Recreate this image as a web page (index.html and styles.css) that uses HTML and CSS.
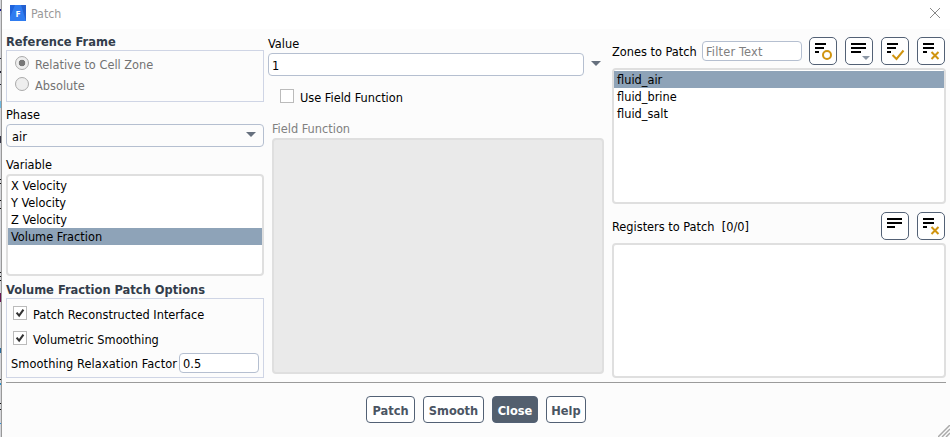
FILE: index.html
```html
<!DOCTYPE html>
<html lang="en">
<head>
    <meta charset="UTF-8">
    <meta name="viewport" content="width=device-width, initial-scale=1.0">
    <title>Patch</title>
    <link rel="stylesheet" href="styles.css">
</head>
<body>
    <div class="desktop-edge"></div>
    <div class="dialog">
        <header class="titlebar">
            <svg class="app-icon" width="16" height="16" viewBox="0 0 16 16">
                <rect width="16" height="16" fill="#2f7cf0"/>
                <path d="M0 0H5L0 12Z" fill="#1f63dc"/>
                <path d="M11 0H16V16Z" fill="#2360d0"/>
                <text x="5.4" y="11.6" font-size="9" font-weight="bold" fill="#fff">F</text>
            </svg>
            <span class="title">Patch</span>
            <svg class="close-x" width="10" height="10" viewBox="0 0 10 10"><path d="M0 0L10 10M10 0L0 10" stroke="#888" fill="none"/></svg>
        </header>

        <main class="content">
            <section class="col-left">
                <h2>Reference Frame</h2>
                <div class="group frame-group">
                    <label class="radio"><i class="dot on"></i>Relative to Cell Zone</label>
                    <label class="radio"><i class="dot"></i>Absolute</label>
                </div>

                <div class="label phase-label">Phase</div>
                <div class="select"><span>air</span><i class="arrow"></i></div>

                <div class="label variable-label">Variable</div>
                <ul class="list variables">
                    <li>X Velocity</li>
                    <li>Y Velocity</li>
                    <li>Z Velocity</li>
                    <li class="selected">Volume Fraction</li>
                </ul>

                <h2 class="options-title">Volume Fraction Patch Options</h2>
                <div class="group options-group">
                    <label class="check"><svg class="box" viewBox="0 0 14 14"><path d="M3 6.5L6 10L11 3"/></svg>Patch Reconstructed Interface</label>
                    <label class="check"><svg class="box" viewBox="0 0 14 14"><path d="M3 6.5L6 10L11 3"/></svg>Volumetric Smoothing</label>
                    <div class="factor"><span>Smoothing Relaxation Factor</span><div class="field">0.5</div></div>
                </div>
            </section>

            <section class="col-mid">
                <div class="label">Value</div>
                <div class="value-row"><div class="field">1</div><i class="arrow"></i></div>
                <label class="check use-field"><svg class="box" viewBox="0 0 14 14"></svg>Use Field Function</label>
                <div class="label disabled function-label">Field Function</div>
                <div class="function-box"></div>
            </section>

            <section class="col-right">
                <div class="toolbar">
                    <span class="zones-label">Zones to Patch</span>
                    <div class="field filter">Filter Text</div>
                    <button class="tool"><svg viewBox="0 0 28 28"><path class="lines" d="M6 7H17M6 11H15M6 15H10"/><circle class="mark" cx="18" cy="18" r="4"/></svg></button>
                    <button class="tool"><svg viewBox="0 0 28 28"><path class="lines" d="M6 7H21M6 11H21M6 15H16"/><path d="M17 19H25L21 23Z" fill="#8c97a5"/></svg></button>
                    <button class="tool"><svg viewBox="0 0 28 28"><path class="lines" d="M6 7H17M6 11H15M6 15H10"/><path class="mark" d="M11.5 18L15.5 22L22.5 13.5"/></svg></button>
                    <button class="tool"><svg viewBox="0 0 28 28"><path class="lines" d="M6 7H17M6 11H17M6 15H10"/><path class="mark" d="M14.5 15L21.5 22M21.5 15L14.5 22"/></svg></button>
                </div>
                <ul class="list zones">
                    <li class="selected">fluid_air</li>
                    <li>fluid_brine</li>
                    <li>fluid_salt</li>
                </ul>
                <div class="toolbar registers-bar">
                    <span class="registers-label">Registers to Patch&nbsp; [0/0]</span>
                    <button class="tool"><svg viewBox="0 0 28 28"><path class="lines" d="M6 7H21M6 11H21M6 15H14"/></svg></button>
                    <button class="tool"><svg viewBox="0 0 28 28"><path class="lines" d="M6 7H17M6 11H17M6 15H10"/><path class="mark" d="M14.5 15L21.5 22M21.5 15L14.5 22"/></svg></button>
                </div>
                <div class="list registers"></div>
            </section>
        </main>

        <footer class="actions">
            <button class="btn patch">Patch</button>
            <button class="btn smooth">Smooth</button>
            <button class="btn close">Close</button>
            <button class="btn help">Help</button>
        </footer>
        <svg class="grip" width="12" height="12" viewBox="0 0 12 12"><path d="M0 12L12 0M4 12L12 4M8 12L12 8" stroke="#aaa" stroke-width="1.5"/></svg>
    </div>
</body>
</html>
```
FILE: styles.css
```css
* {
    box-sizing: border-box;
}
body {
    margin: 0;
    display: flex;
    width: 950px;
    height: 437px;
    overflow: hidden;
    font-family: "DejaVu Sans Condensed", "DejaVu Sans", sans-serif;
    font-size: 12.65px;
    line-height: 17px;
    color: #000;
    background: #fcfcfc;
}
/* sliver of the window behind the dialog */
.desktop-edge {
    width: 2px;
    border-right: 1px solid #999;
    background:
        linear-gradient(#15158a, #15158a) 0 9px / 2px 2px no-repeat,
        linear-gradient(#223, #223) 0 58px / 2px 1px no-repeat,
        linear-gradient(#223, #223) 0 71px / 2px 2px no-repeat,
        linear-gradient(#223, #223) 0 84px / 2px 1px no-repeat,
        linear-gradient(#6db8e0, #6db8e0) 0 101px / 2px 7px no-repeat,
        linear-gradient(#334, #334) 0 136px / 2px 7px no-repeat,
        linear-gradient(#111, #111) 0 179px / 2px 1px no-repeat,
        linear-gradient(#111, #111) 0 183px / 2px 1px no-repeat,
        linear-gradient(#111, #111) 0 200px / 2px 1px no-repeat,
        linear-gradient(#111, #111) 0 208px / 2px 1px no-repeat,
        linear-gradient(#111, #111) 0 272px / 2px 1px no-repeat,
        linear-gradient(#111, #111) 0 276px / 2px 1px no-repeat,
        linear-gradient(#111, #111) 0 280px / 2px 1px no-repeat,
        linear-gradient(#6a1550, #6a1550) 0 293px / 2px 9px no-repeat,
        linear-gradient(#2b6c9c, #2b6c9c) 0 348px / 2px 5px no-repeat,
        linear-gradient(#111, #111) 0 379px / 2px 1px no-repeat,
        linear-gradient(#2b8fc8, #2b8fc8) 0 383px / 2px 2px no-repeat,
        linear-gradient(#111, #111) 0 403px / 2px 1px no-repeat,
        linear-gradient(#111, #111) 0 409px / 2px 1px no-repeat,
        linear-gradient(#2b8fd8, #2b8fd8) 0 423px / 2px 1px no-repeat,
        #d5d6da;
}
.dialog {
    position: relative;
    flex: 1;
    display: flex;
    flex-direction: column;
}
.titlebar {
    display: flex;
    align-items: center;
    height: 29px;
    padding: 0 10px 3px 8px;
    background: #fff;
    color: #999;
}
.title {
    flex: 1;
    margin-left: 5px;
    padding-top: 2px;
    font-size: 12.3px;
}
.content {
    display: flex;
    height: 354px;
    margin: 0 4px;
    border-bottom: 1px solid #9b9b9b;
}
.col-left {
    width: 258px;
    padding-top: 4px;
}
.col-mid {
    width: 336px;
    margin-left: 4px;
    padding-top: 6px;
}
.col-right {
    width: 334px;
    margin-left: 8px;
    padding-top: 8px;
}
h2 {
    margin: 0;
    font-size: 12.75px;
    line-height: 17px;
    color: #333d4b;
    white-space: nowrap;
}
.group {
    border: 1px solid #cfd5e5;
}
.frame-group {
    height: 52px;
    padding: 3px 8px;
    color: #737373;
}
.radio {
    display: flex;
    align-items: center;
    height: 21px;
}
.dot {
    width: 14px;
    height: 14px;
    margin: -3px 6px 0 0;
    border: 1px solid #aaa;
    border-radius: 50%;
    background: #eee;
}
.dot.on {
    background: radial-gradient(circle, #777 3px, #eee 3.6px);
}
.label {
    margin-bottom: 1px;
}
.phase-label {
    margin-top: 4px;
}
.select {
    display: flex;
    justify-content: space-between;
    align-items: center;
    height: 23px;
    padding: 1px 7px 0 5px;
    border: 1px solid #b5bfd0;
    border-radius: 4px;
}
.arrow {
    border: 5px solid transparent;
    border-top-color: #66707e;
    border-bottom: 0;
}
.select .arrow {
    margin-top: -3px;
}
.variable-label {
    margin-top: 9px;
}
.list {
    margin: 0;
    padding: 0;
    list-style: none;
    background: #fff;
    border: 2px solid #dfdfdf;
    border-radius: 4px;
}
.list li {
    height: 17px;
    padding-left: 3px;
    line-height: 18px;
}
.list .selected {
    background: #8ea3b8;
}
.variables {
    height: 102px;
    padding-top: 1px;
}
.variables li {
    line-height: 17px;
}
.options-title {
    margin-top: 5px;
}
.options-group {
    height: 80px;
    padding: 3px 4px;
}
.check {
    display: flex;
    align-items: center;
    height: 25px;
    padding-left: 2px;
}
.box {
    width: 14px;
    height: 14px;
    margin: -3px 6px 0 0;
    border: 1px solid #bbb;
    background: #fff;
}
.box path {
    fill: none;
    stroke: #333;
    stroke-width: 2.4;
}
.factor {
    display: flex;
    align-items: center;
    justify-content: space-between;
    height: 22px;
    letter-spacing: 0.1px;
    white-space: nowrap;
}
.field {
    height: 20px;
    padding: 0 3px;
    border: 1px solid #b5bfd0;
    border-radius: 4px;
    background: #fff;
    line-height: 19px;
}
.factor .field {
    width: 80px;
}
.value-row {
    display: flex;
    align-items: center;
    height: 23px;
}
.value-row .field {
    width: 316px;
    height: 23px;
    margin-right: 7px;
    line-height: 23px;
}
.value-row .arrow {
    margin-top: -2px;
}
.use-field {
    margin-top: 9px;
    padding-left: 12px;
}
.use-field .box {
    margin-top: -3px;
}
.function-label {
    margin: 10px 0 1px 4px;
}
.disabled {
    color: #808080;
}
.function-box {
    width: 332px;
    height: 236px;
    margin-left: 4px;
    border: 2px solid #dfdfdf;
    border-radius: 4px;
    background: #eaeaea;
}
.toolbar {
    display: flex;
    align-items: center;
    gap: 8px;
    height: 28px;
}
.zones-label {
    width: 82px;
    padding-top: 1px;
    white-space: nowrap;
}
.filter {
    width: 100px;
    margin-right: -1px;
    color: #808080;
    letter-spacing: 0.2px;
}
.tool {
    width: 28px;
    height: 28px;
    padding: 0;
    border: 1px solid #536175;
    border-radius: 5px;
    background: #fff;
}
.tool svg {
    display: block;
    width: 28px;
    height: 28px;
    margin: -1px;
}
.lines {
    fill: none;
    stroke: #000;
    stroke-width: 2;
}
.mark {
    fill: none;
    stroke: #d0940f;
    stroke-width: 2;
}
.zones {
    height: 136px;
    margin-top: 3px;
    padding-top: 1px;
}
.registers-bar {
    margin-top: 8px;
    padding-right: 1px;
}
.registers-label {
    flex: 1;
    padding-top: 1px;
}
.registers {
    height: 135px;
    margin-top: 3px;
}
.actions {
    display: flex;
    justify-content: center;
    gap: 8px;
    padding-top: 13px;
}
.btn {
    height: 27px;
    padding: 1px 0 0;
    border: 1px solid #536175;
    border-radius: 4px;
    background: #fff;
    color: #4b5563;
    font: bold 12.7px "DejaVu Sans Condensed", "DejaVu Sans", sans-serif;
}
.patch {
    width: 49px;
}
.smooth {
    width: 61px;
}
.close {
    width: 46px;
    background: #535f6e;
    color: #fff;
}
.help {
    width: 40px;
}
.grip {
    position: absolute;
    right: 0;
    bottom: 0;
}
.app-icon text {
    font-family: "Open Sans", sans-serif;
}
```
